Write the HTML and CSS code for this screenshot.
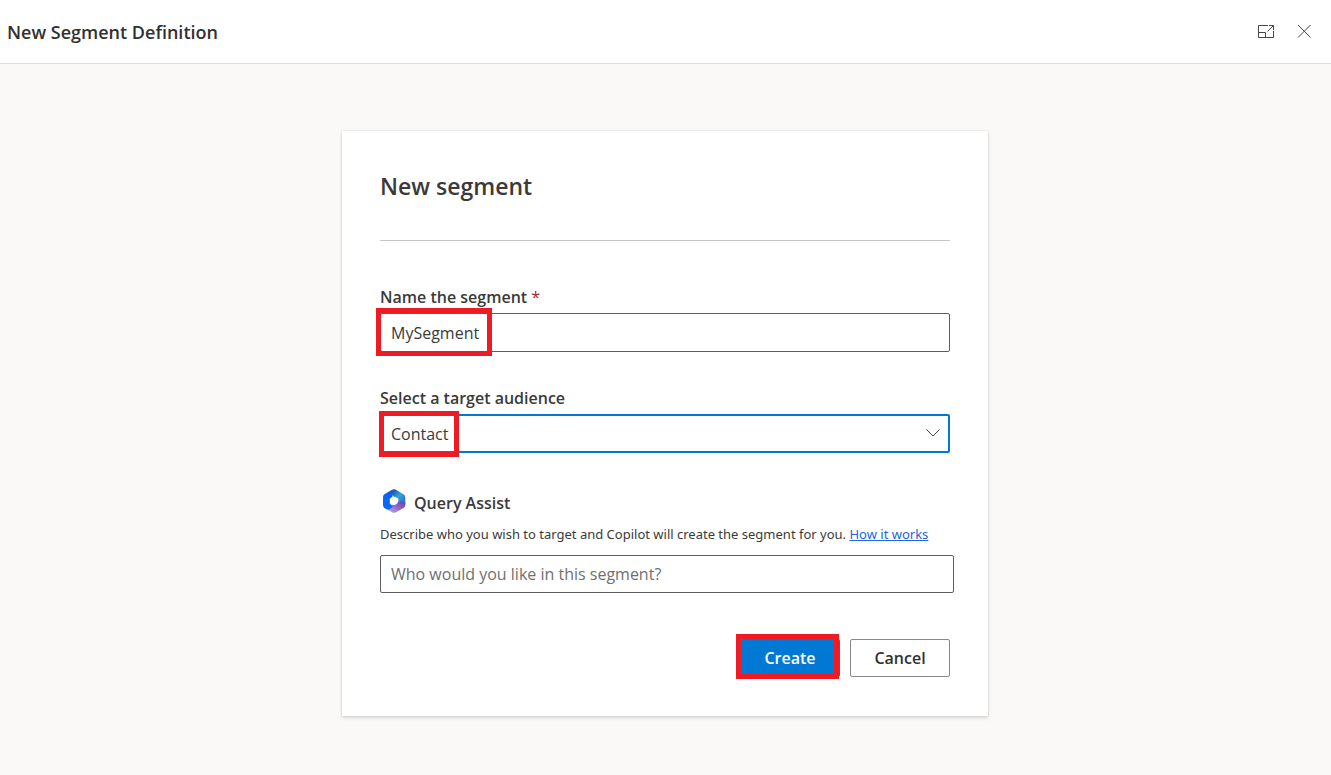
FILE: index.html
```html
<!DOCTYPE html>
<html lang="en">
<head>
<meta charset="utf-8">
<meta name="viewport" content="width=device-width, initial-scale=1">
<title>New Segment Definition</title>
<link rel="stylesheet" href="styles.css">
</head>
<body>
<header class="topbar">
  <h1 class="topbar-title">New Segment Definition</h1>
  <div class="topbar-actions">
    <button class="icon-button" type="button" aria-label="Expand">
      <svg width="18" height="18" viewBox="0 0 18 18" fill="none" stroke="#484644"><path d="M11 2.500H1.500V14.500H16.500V8M1.500 9.500H8.500V14.500M12 2.500H16.500V7M16.500 2.500L10.500 8.500"/></svg>
    </button>
    <button class="icon-button" type="button" aria-label="Close">
      <svg width="18" height="18" viewBox="0 0 18 18" fill="none" stroke="#484644"><path d="M3 2L15.500 14.500M15.500 2L3 14.500"/></svg>
    </button>
  </div>
</header>
<main class="page">
  <form class="card">
    <h2 class="card-title">New segment</h2>
    <div class="field field-name">
      <label class="label" for="segment-name">Name the segment <span class="required">*</span></label>
      <div class="control">
        <input class="input" id="segment-name" type="text" value="MySegment">
        <span class="mark mark-name"></span>
      </div>
    </div>
    <div class="field field-audience">
      <label class="label" for="audience">Select a target audience</label>
      <div class="control">
        <select class="input select" id="audience"><option>Contact</option></select>
        <svg class="chevron" width="16" height="10" viewBox="0 0 16 10" fill="none" stroke="#484644"><path d="M1.500 1.500L8 8L14.500 1.500"/></svg>
        <span class="mark mark-audience"></span>
      </div>
    </div>
    <section class="assist">
      <div class="assist-head">
        <svg width="24" height="24" viewBox="0 0 24 24" aria-hidden="true">
          <defs>
            <linearGradient id="blue" x1="0" y1="0" x2="0" y2="1"><stop offset="0" stop-color="#1956c9"/><stop offset=".4" stop-color="#0866ff"/><stop offset="1" stop-color="#0b67f5"/></linearGradient>
            <linearGradient id="teal" x1="0" y1="0" x2="1" y2="1"><stop offset="0" stop-color="#183f87"/><stop offset=".5" stop-color="#3a9fdc"/><stop offset="1" stop-color="#2465cf"/></linearGradient>
            <linearGradient id="violet" x1="0" y1="1" x2="1" y2="0"><stop offset="0" stop-color="#c8a4f2"/><stop offset=".5" stop-color="#9069c6"/><stop offset="1" stop-color="#5a42a8"/></linearGradient>
          </defs>
          <path fill="url(#teal)" d="M11 .2Q12.300 0 13.500.6L21.500 5.200Q23.300 6.300 23.300 8.200V15.500L16.300 12V9.500L11.500 7.500L8.500 4Z"/>
          <path fill="url(#violet)" d="M23.300 13.500V16Q23.300 18 21.500 19L14 23.300Q12 24.300 10 23.300L6.500 21.200L8 17L16.300 12.200Z"/>
          <path fill="url(#blue)" d="M10.500 .5V7.800L7.800 9.800V14.500L11 17.500L7 20.800Q5.500 21 4 20L2.800 19.300Q1 18.200 1 16V8Q1 6 2.800 5L10 .8Z"/>
          <path fill="#fff" d="M12 7.800Q12.800 7.800 15 9.200Q16 9.800 16 12Q16 14 15 14.800Q12.800 16.200 12 16.200Q11.200 16.200 9 14.800Q8 14 8 12Q8 9.800 9 9.200Q11.200 7.800 12 7.800Z"/>
        </svg>
        <label class="label" for="query">Query Assist</label>
      </div>
      <p class="hint">Describe who you wish to target and Copilot will create the segment for you. <a class="link" href="#how-it-works">How it works</a></p>
      <input class="input" id="query" type="text" placeholder="Who would you like in this segment?">
    </section>
    <div class="actions">
      <div class="control">
        <button class="button primary" type="button">Create</button>
        <span class="mark mark-create"></span>
      </div>
      <button class="button" type="button">Cancel</button>
    </div>
  </form>
</main>
</body>
</html>
```
FILE: styles.css
```css
* { box-sizing: border-box; }
body {
  margin: 0;
  min-height: 100vh;
  background: #faf9f8;
  color: #3b3a39;
  font-family: "Open Sans", "Noto Sans", sans-serif;
  font-size: 16px;
}
h1, h2, p { margin: 0; }
.topbar {
  display: flex;
  align-items: center;
  justify-content: space-between;
  height: 64px;
  padding: 0 16px 0 7px;
  background: #fff;
  border-bottom: 1px solid #e1dfdd;
}
.topbar-title { color: #323130; font-size: 18px; line-height: 24px; font-weight: 600; }
.topbar-actions { display: flex; gap: 16px; }
.icon-button {
  display: flex;
  padding: 2px;
  border: 0;
  background: transparent;
}
.page { padding: 67px 17px 56px 16px; }
.card {
  max-width: 646px;
  margin: 0 auto;
  padding: 39px 38px 39px;
  background: #fff;
  box-shadow: 0 2px 4px rgba(0, 0, 0, .13), 0 0 2px rgba(0, 0, 0, .11);
}
.card-title {
  padding-bottom: 38px;
  border-bottom: 1px solid #c8c6c4;
  font-size: 23px;
  line-height: 32px;
  font-weight: 600;
}
.field-name { margin-top: 44px; }
.field-audience { margin-top: 34px; }
.label {
  display: block;
  font-size: 16px;
  line-height: 24px;
  font-weight: 600;
}
.field .label { margin-bottom: 4px; }
.required { color: #a4262c; font-weight: 400; }
.control { position: relative; }
.input {
  display: block;
  width: 100%;
  height: 39px;
  padding: 0 10px;
  border: 1px solid #605e5c;
  border-radius: 2px;
  background: #fff;
  color: #3b3a39;
  font: inherit;
}
.input::placeholder { color: #707070; opacity: 1; }
.select {
  appearance: none;
  padding: 0 9px;
  border: 2px solid #0078d4;
}
.chevron { position: absolute; right: 9px; top: 14px; pointer-events: none; }
.mark { position: absolute; border: 5px solid #ed1c24; pointer-events: none; }
.mark-name { left: -4px; top: -5px; width: 116px; height: 48px; }
.mark-audience { left: -1px; top: -3px; width: 80px; height: 46px; }
.mark-create { left: -4px; top: -5px; width: 103px; height: 45px; }
.assist { margin: 36px -4px 0 0; }
.assist-head { display: flex; gap: 8px; padding-left: 2px; }
.assist-head .label { padding-top: 2px; }
.hint {
  margin: 9px 0 11px;
  font-family: "Noto Sans", "Open Sans", sans-serif;
  font-size: 13px;
  line-height: 20px;
}
.link { color: #2266e3; }
.assist .input { height: 38px; }
.actions { display: flex; justify-content: flex-end; gap: 10px; margin-top: 46px; }
.button {
  display: block;
  width: 100px;
  height: 38px;
  padding: 0;
  border: 1px solid #8a8886;
  border-radius: 2px;
  background: #fff;
  color: #323130;
  font: inherit;
  font-weight: 600;
}
.primary { border-color: #0078d4; background: #0078d4; color: #fff; }
```
